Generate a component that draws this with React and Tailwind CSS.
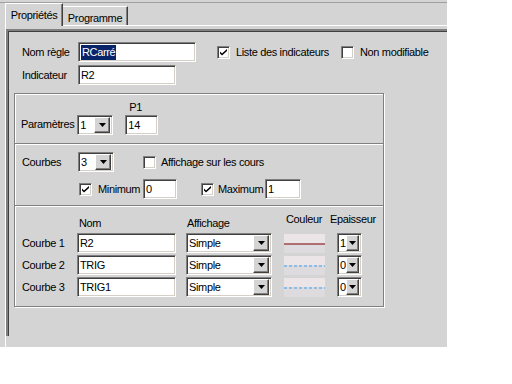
import React from 'react';

const sunken =
    'bg-white border border-t-[#808080] border-l-[#808080] border-b-white border-r-white shadow-[inset_1px_1px_0_#404040,inset_-1px_-1px_0_#d4d0c8]';

function Input({ w, value, selected }) {
    return (
        <div className={`${sunken} ${w} h-[20px] flex items-center pl-[2px] shrink-0`}>
            {selected ? (
                <span className="bg-[#0a246a] text-white leading-[15px] px-[1px]">{value}</span>
            ) : (
                <span className="leading-[15px]">{value}</span>
            )}
        </div>
    );
}

function Arrow() {
    return (
        <svg width="7" height="4" viewBox="0 0 7 4">
            <path d="M0 0h7L3.5 4z" fill="#000" />
        </svg>
    );
}

function Combo({ w, value }) {
    return (
        <div className={`${sunken} ${w} h-[20px] flex items-center pl-[2px] pr-[2px] shrink-0`}>
            <span className="flex-1 leading-[15px]">{value}</span>
            <div className="w-[16px] h-[16px] bg-[#d4d4d4] border border-t-white border-l-white border-b-[#404040] border-r-[#404040] shadow-[inset_-1px_-1px_0_#808080] flex items-center justify-center">
                <Arrow />
            </div>
        </div>
    );
}

function Check({ checked }) {
    return (
        <div className={`${sunken} w-[13px] h-[13px] flex items-center justify-center shrink-0`}>
            {checked && (
                <svg width="7" height="7" viewBox="0 0 7 7">
                    <path d="M0 2.5l2 2 5-4.5v2l-5 4.5-2-2z" fill="#000" />
                </svg>
            )}
        </div>
    );
}

function Swatch({ kind }) {
    return (
        <div className="w-[41px] h-[19px] bg-[#dedbde] flex flex-col shrink-0">
            <div className="h-[9px] bg-[#ebe5e8]" />
            <svg width="41" height="2" viewBox="0 0 41 2">
                {kind === 'solid' ? (
                    <line x1="0" y1="1" x2="41" y2="1" stroke="#800000" strokeWidth="1" />
                ) : (
                    <line x1="0" y1="1" x2="41" y2="1" stroke="#3a9ef0" strokeWidth="1" strokeDasharray="3 2" />
                )}
            </svg>
        </div>
    );
}

export default function App() {
    const courbes = [
        { label: 'Courbe 1', nom: 'R2', ep: '1', kind: 'solid' },
        { label: 'Courbe 2', nom: 'TRIG', ep: '0', kind: 'dash' },
        { label: 'Courbe 3', nom: 'TRIG1', ep: '0', kind: 'dash' },
    ];

    return (
        <div className="w-[447px] h-[347px] bg-[#d4d4d4] flex flex-col pt-[2px] text-[11px] tracking-[-0.35px] text-black font-['Liberation_Sans',Arial,sans-serif]">
            <div className="h-px bg-[#a0a0a0]" />
            {/* tabs */}
            <div className="flex items-end pl-[5px] h-[22px]">
                <div className="relative z-10 w-[58px] h-[23px] -mb-px bg-[#d4d4d4] border-t border-l border-white border-r border-r-[#404040] shadow-[inset_-1px_0_0_#808080] flex justify-center pt-[3px]">
                    Propriétés
                </div>
                <div className="w-[65px] h-[19px] border-t border-t-white border-r border-r-[#404040] shadow-[inset_-1px_0_0_#808080] flex justify-center pt-[3px]">
                    Programme
                </div>
            </div>
            {/* panel */}
            <div className="flex-1 border-t border-l border-white ml-[5px] pt-[3px] flex flex-col">
                <div className="flex-1 mb-[11px] border-t-2 border-l-2 border-t-[#808080] border-l-[#808080] shadow-[inset_1px_1px_0_#404040] pt-[11px] pl-[6px]">
                    <div className="pl-[8px]">
                        <div className="flex items-center h-[20px]">
                            <span className="w-[56px]">Nom règle</span>
                            <Input w="w-[118px]" value="RCarré" selected />
                            <div className="ml-[21px] flex items-center">
                                <Check checked />
                                <span className="ml-[6px] w-[105px]">Liste des indicateurs</span>
                                <Check />
                                <span className="ml-[6px]">Non modifiable</span>
                            </div>
                        </div>
                        <div className="flex items-center h-[20px] mt-[3px]">
                            <span className="w-[56px]">Indicateur</span>
                            <Input w="w-[98px]" value="R2" />
                        </div>
                    </div>

                    <div className="mt-[8px] w-[370px] border border-[#808080] shadow-[inset_1px_1px_0_white,1px_1px_0_white]">
                        {/* Paramètres */}
                        <div className="h-[49px] flex items-end pl-[6px] pb-[8px]">
                            <span className="mb-[3px]">Paramètres</span>
                            <div className="ml-[3px]">
                                <Combo w="w-[36px]" value="1" />
                            </div>
                            <div className="ml-[12px] flex flex-col">
                                <span className="pl-[4px] leading-[13px] mb-[1px]">P1</span>
                                <Input w="w-[33px]" value="14" />
                            </div>
                        </div>
                        {/* Courbes */}
                        <div className="h-[62px] border-t border-t-[#808080] shadow-[inset_0_1px_0_white] pl-[7px] pt-[8px]">
                            <div className="flex items-center h-[20px]">
                                <span className="w-[56px]">Courbes</span>
                                <Combo w="w-[36px]" value="3" />
                                <div className="ml-[29px]">
                                    <Check />
                                </div>
                                <span className="ml-[5px]">Affichage sur les cours</span>
                            </div>
                            <div className="flex items-center h-[20px] mt-[7px] pl-[57px]">
                                <Check checked />
                                <span className="ml-[6px] w-[45px]">Minimum</span>
                                <Input w="w-[34px]" value="0" />
                                <div className="ml-[24px]">
                                    <Check checked />
                                </div>
                                <span className="ml-[4px] w-[47px]">Maximum</span>
                                <Input w="w-[36px]" value="1" />
                            </div>
                        </div>
                        {/* Courbe list */}
                        <div className="h-[101px] border-t border-t-[#808080] shadow-[inset_0_1px_0_white] pl-[7px] pt-[5px]">
                            <div className="flex items-end h-[20px]">
                                <span className="w-[57px]" />
                                <span className="w-[108px]">Nom</span>
                                <span className="w-[99px]">Affichage</span>
                                <span className="w-[44px] self-start">Couleur</span>
                                <span className="self-start">Epaisseur</span>
                            </div>
                            {courbes.map((c) => (
                                <div key={c.label} className="flex items-center h-[20px] mt-[2px]">
                                    <span className="w-[55px]">{c.label}</span>
                                    <Input w="w-[99px]" value={c.nom} />
                                    <div className="ml-[10px]">
                                        <Combo w="w-[86px]" value="Simple" />
                                    </div>
                                    <div className="ml-[12px]">
                                        <Swatch kind={c.kind} />
                                    </div>
                                    <div className="ml-[12px]">
                                        <Combo w="w-[25px]" value={c.ep} />
                                    </div>
                                </div>
                            ))}
                        </div>
                    </div>
                </div>
            </div>
        </div>
    );
}
